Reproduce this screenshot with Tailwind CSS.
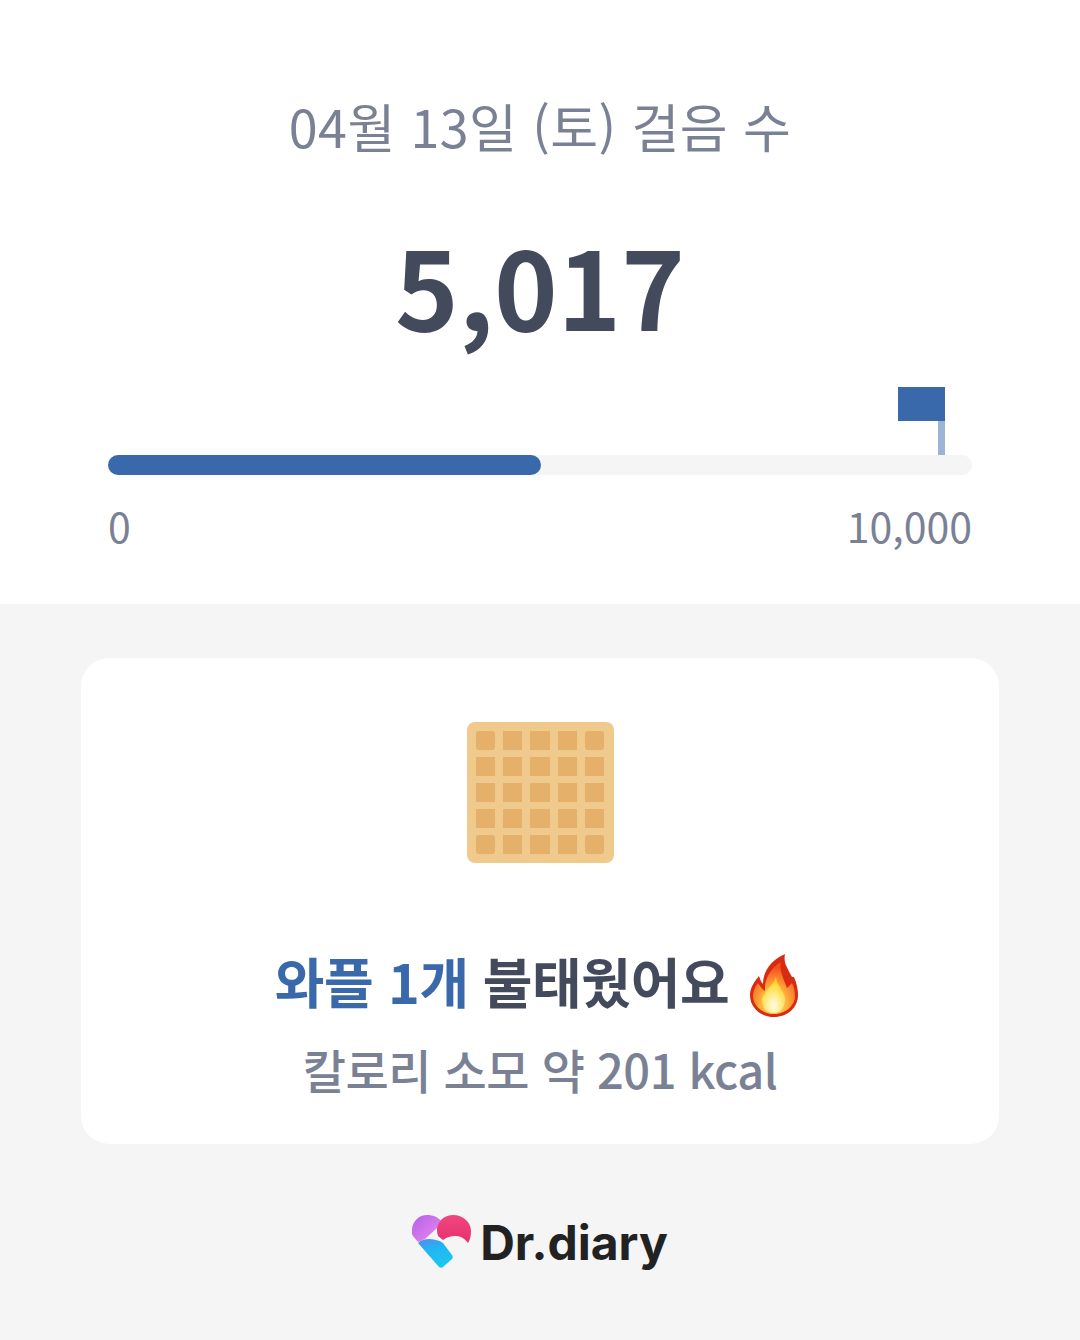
<!DOCTYPE html>
<html lang="ko">

<head>
    <meta charset="UTF-8">
    <meta name="viewport" content="width=device-width, initial-scale=1.0">
    <script src="https://cdn.jsdelivr.net/npm/@tailwindcss/browser@4"></script>
    <title>걸음 수</title>
</head>

<body class="bg-[#f5f5f5] font-['Noto_Sans_CJK_KR','Noto_Sans',sans-serif] w-[1080px] h-[1340px] overflow-hidden">
    <!-- Steps -->
    <section class="bg-white h-[604px] pt-[89px] px-[108px] flex flex-col items-center">
        <h1 class="text-[52px] leading-[74px] font-normal text-[#7b8194] tracking-[0.4px]">04월 13일 (토) 걸음 수</h1>
        <p class="mt-[56px] text-[108px] leading-[130px] font-bold text-[#434a5c]">5,017</p>

        <div class="w-full mt-[38px]">
            <div class="flex flex-col items-end pr-[27px]">
                <div class="w-[47px] h-[34px] bg-[#3a69ab]"></div>
                <div class="w-[7px] h-[34px] bg-[#9db4d6]"></div>
            </div>
            <div class="h-5 rounded-full bg-[#f5f5f5]">
                <div class="h-5 w-[433px] rounded-full bg-[#3a69ab]"></div>
            </div>
            <div class="flex justify-between mt-[19px] text-[41px] leading-[62px] text-[#7b8194]">
                <span>0</span>
                <span>10,000</span>
            </div>
        </div>
    </section>

    <!-- Calorie card -->
    <section class="mt-[54px] mx-[81px] h-[486px] bg-white rounded-[28px] pt-[64px] flex flex-col items-center">
        <div class="w-[147px] h-[141px] bg-[#f0c98d] rounded-[8px] p-[9px] grid grid-cols-5 grid-rows-5 gap-x-[8px] gap-y-[7px]">
            <div class="bg-[#e4b06a] rounded-[3px]"></div>
            <div class="bg-[#e4b06a]"></div>
            <div class="bg-[#e4b06a]"></div>
            <div class="bg-[#e4b06a]"></div>
            <div class="bg-[#e4b06a] rounded-[3px]"></div>
            <div class="bg-[#e4b06a]"></div>
            <div class="bg-[#e4b06a]"></div>
            <div class="bg-[#e4b06a]"></div>
            <div class="bg-[#e4b06a]"></div>
            <div class="bg-[#e4b06a]"></div>
            <div class="bg-[#e4b06a]"></div>
            <div class="bg-[#e4b06a]"></div>
            <div class="bg-[#e4b06a]"></div>
            <div class="bg-[#e4b06a]"></div>
            <div class="bg-[#e4b06a]"></div>
            <div class="bg-[#e4b06a]"></div>
            <div class="bg-[#e4b06a]"></div>
            <div class="bg-[#e4b06a]"></div>
            <div class="bg-[#e4b06a]"></div>
            <div class="bg-[#e4b06a]"></div>
            <div class="bg-[#e4b06a] rounded-[3px]"></div>
            <div class="bg-[#e4b06a]"></div>
            <div class="bg-[#e4b06a]"></div>
            <div class="bg-[#e4b06a]"></div>
            <div class="bg-[#e4b06a] rounded-[3px]"></div>
        </div>

        <div class="mt-[78px] mr-[7px] flex items-center h-[80px] text-[54px] leading-[80px] font-bold text-[#434a5c] tracking-[-0.4px]">
            <span class="text-[#3a69ab]">와플 1개</span>
            <span class="ml-[14px]">불태웠어요</span>
            <svg class="ml-[21px] mt-[8px]" width="48" height="63" viewBox="0 0 48 63">
                <defs>
                    <radialGradient id="flame" cx="50%" cy="80%" r="70%">
                        <stop offset="0" stop-color="#ffe27a" />
                        <stop offset="0.45" stop-color="#ffb13c" />
                        <stop offset="1" stop-color="#f4511e" />
                    </radialGradient>
                    <radialGradient id="core" cx="50%" cy="80%" r="65%">
                        <stop offset="0" stop-color="#fffbe6" />
                        <stop offset="0.4" stop-color="#fff09a" />
                        <stop offset="1" stop-color="#ffd52e" />
                    </radialGradient>
                </defs>
                <path d="M35 0C33 9 38 15 42 23L44 23C47 30 48 36 48 41C48 54 37 63 24 63C11 63 0 54 0 41C0 34 4 28 9 22C10 25 11 28 13 30C13 17 21 6 35 0Z" fill="#d92a12" />
                <path d="M31 8C29 14 32 21 37 34L42 29C44 33 45 37 45 42C45 52 35 60 24 60C13 60 3 52 3 42C3 37 5 33 8 29C10 32 12 35 15 37C14 25 21 14 31 8Z" fill="url(#flame)" />
                <path d="M26 23C26 31 35 37 35 46C35 54 30 59 24 59C17 59 12 54 12 47C12 37 23 33 26 23Z" fill="url(#core)" />
            </svg>
        </div>
        <p class="mt-[13px] text-[47px] leading-[70px] font-medium text-[#7b8194] tracking-[-0.5px]">칼로리 소모 약 201 kcal</p>
    </section>

    <!-- Logo -->
    <footer class="mt-[71px] flex items-start justify-center">
        <svg width="60" height="55" viewBox="0 0 60 55">
            <defs>
                <linearGradient id="logoPurple" x1="0" y1="0" x2="1" y2="1">
                    <stop offset="0" stop-color="#b95fe8" />
                    <stop offset="1" stop-color="#e58cf0" />
                </linearGradient>
                <linearGradient id="logoPink" x1="0" y1="0" x2="0" y2="1">
                    <stop offset="0" stop-color="#f0477f" />
                    <stop offset="1" stop-color="#e8306f" />
                </linearGradient>
                <linearGradient id="logoBlue" x1="0.2" y1="0" x2="0.6" y2="1">
                    <stop offset="0" stop-color="#4f8ff0" />
                    <stop offset="0.35" stop-color="#22b4f2" />
                    <stop offset="1" stop-color="#1cc8f0" />
                </linearGradient>
            </defs>
            <path d="M15 0C21 0 26 2 29 6L25 13L13 24L6 27L1 21C-1 18 0 14 0 14C1 6 7 0 15 0Z" fill="url(#logoPurple)" />
            <path d="M25 13C27 5 33 0 41 0C51 0 59 7 59 16C59 21 58 25 56 28C54 25 51 23 49 22C44 20 36 21 31 25L26 21C25 18 25 15 25 13Z" fill="url(#logoPink)" />
            <path d="M6 28C9 25 13 24 17 24C21 24 27 25 31 28L40 40C41 41 41 43 40 44L31 52C30 53 28 53 27 52Z" fill="url(#logoBlue)" />
        </svg>
        <span class="ml-[8px] font-['Inter',sans-serif] text-[48px] leading-[56px] font-bold text-[#222222]">Dr.diary</span>
    </footer>
</body>

</html>
